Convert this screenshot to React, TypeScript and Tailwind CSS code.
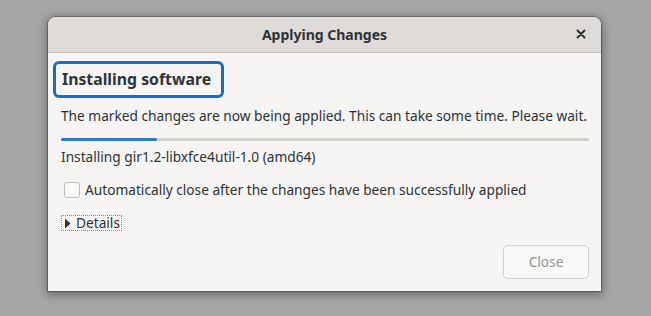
import React from "react";

export default function App() {
  return (
    <div
      className="w-[651px] h-[316px] bg-[#a6a6a6] pl-[48px] pt-[17px] overflow-hidden"
      style={{ fontFamily: '"Noto Sans", "Open Sans", sans-serif' }}
    >
      <div className="w-[553px] h-[274px] bg-[#f6f5f4] rounded-t-[8px] shadow-[0_2px_8px_2px_rgba(0,0,0,0.35),0_0_0_1px_rgba(0,0,0,0.25)] flex flex-col overflow-hidden">
        <div className="h-[36px] bg-[#dedbd8] border-b border-[#c0bdb8] flex items-center relative shrink-0">
          <div className="flex-1 text-center text-[14px] font-bold text-[#2e3436]">Applying Changes</div>
          <div className="absolute right-[12px] top-[9px] w-[16px] h-[16px] flex items-center justify-center">
            <svg width="10" height="10" viewBox="0 0 10 10">
              <path d="M1.5 1.5 L8.5 8.5 M8.5 1.5 L1.5 8.5" stroke="#2e3436" strokeWidth="2" strokeLinecap="round" />
            </svg>
          </div>
        </div>
        <div className="flex flex-col pl-[13px] pr-[12px] pt-[8px] text-[#2e3436]">
          <div className="self-start ml-[-8px] w-[171px] h-[37px] px-[6px] flex items-center border-[3px] border-[#1a6fc4] rounded-[6px] text-[15.8px] font-bold">
            Installing software
          </div>
          <div className="mt-[8px] text-[13.7px] leading-[20px] whitespace-nowrap">
            The marked changes are now being applied. This can take some time. Please wait.
          </div>
          <div className="mt-[12px] h-[3px] w-[528px] bg-[#d3d0cc] rounded-full flex">
            <div className="h-full w-[96px] bg-[#2b7ad0] rounded-full" />
          </div>
          <div className="mt-[6px] text-[13.7px] leading-[20px]">Installing gir1.2-libxfce4util-1.0 (amd64)</div>
          <div className="mt-[13px] flex items-center ml-[3px]">
            <div className="w-[16px] h-[16px] rounded-[3px] border border-[#c3bfba] bg-[#fafaf9]" />
            <span className="ml-[5px] text-[13.7px] leading-[20px]">
              Automatically close after the changes have been successfully applied
            </span>
          </div>
          <div className="mt-[15px] ml-0 self-start flex items-center border border-dotted border-[#8a8a8a] pl-[2px] pr-[1px] h-[16px]">
            <svg width="7" height="11" viewBox="0 0 7 11">
              <path d="M1 0.5 L6.5 5.5 L1 10.5 Z" fill="#2e3436" />
            </svg>
            <span className="ml-[5px] text-[13.7px] leading-[16px]">Details</span>
          </div>
          <div className="mt-[14px] self-end mr-0 w-[86px] h-[34px] rounded-[5px] border border-[#d5d0cc] bg-[#f9f9f8] flex items-center justify-center text-[13.7px] text-[#929595]">
            Close
          </div>
        </div>
      </div>
    </div>
  );
}
